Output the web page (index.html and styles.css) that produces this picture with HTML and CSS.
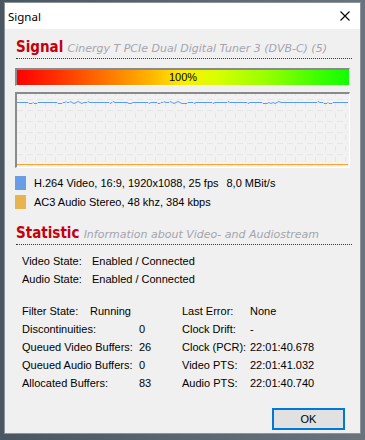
FILE: index.html
```html
<!DOCTYPE html>
<html lang="en">
<head>
    <meta charset="UTF-8">
    <title>Signal</title>
    <link rel="stylesheet" href="styles.css">
</head>
<body>
    <div class="window">
        <div class="titlebar">
            <span class="title">Signal</span>
            <svg class="close" width="10" height="10" viewBox="0 0 10 10">
                <path d="M0.5 0.5L9.5 9.5M9.5 0.5L0.5 9.5" stroke="#000" stroke-width="1.1"/>
            </svg>
        </div>

        <div class="content">
            <div class="section-head">
                <span class="head-main">Signal</span>
                <span class="head-sub">Cinergy T PCIe Dual Digital Tuner 3 (DVB-C) (5)</span>
            </div>

            <div class="level">
                <div class="level-bar">100%</div>
            </div>

            <div class="graph">
                <svg width="331" height="73" viewBox="0 0 331 73">
                    <defs>
                        <pattern id="grid" width="10" height="11" patternUnits="userSpaceOnUse" x="3" y="0">
                            <path d="M0 5.5H3M7 5.5H10M5.5 0V2M5.5 8V11" stroke="#e6e6e6" stroke-width="1" fill="none"/>
                        </pattern>
                    </defs>
                    <rect width="331" height="73" fill="url(#grid)"/>
                    <!-- video bitrate -->
                    <polyline fill="none" stroke="#5b9bef" stroke-width="1"
                        points="0,8.5 11,8.5 12,9.5 15,9.5 16,8.5 17,9.5 20,9.5 21,8.5 40,8.5 41,9.5 45,9.5 46,8.5 48,8.5 49,7.5 50,8.5 52,8.5 53,7.5 55,8.5 57,9.5 59,8.5 61,7.5 63,8.5 65,9.5 67,8.5 70,8.5 71,7.5 73,8.5 92,8.5 93,9.5 95,8.5 96,7.5 98,8.5 110,8.5 112,9.5 114,9.5 116,8.5 131,8.5 132,9.5 134,8.5 140,8.5 141,9.5 143,9.5 144,8.5 146,8.5 147,7.5 149,8.5 152,8.5 153,7.5 155,8.5 157,9.5 159,8.5 161,7.5 163,8.5 165,9.5 170,9.5 171,8.5 176,8.5 177,9.5 179,8.5 195,8.5 196,9.5 198,8.5 210,8.5 211,7.5 213,8.5 230,8.5 231,9.5 233,8.5 245,8.5 246,9.5 250,9.5 252,8.5 254,9.5 256,8.5 258,9.5 260,8.5 262,7.5 264,8.5 300,8.5 301,7.5 303,8.5 306,8.5 307,9.5 310,9.5 311,8.5 312,9.5 315,9.5 316,8.5 331,8.5"/>
                    <!-- audio bitrate -->
                    <line x1="0" y1="70.5" x2="331" y2="70.5" stroke="#f0a830" stroke-width="1"/>
                </svg>
            </div>

            <div class="legend">
                <div class="legend-row">
                    <span class="swatch video"></span>
                    <span>H.264 Video, 16:9, 1920x1088, 25 fps</span>
                    <span class="rate">8,0 MBit/s</span>
                </div>
                <div class="legend-row">
                    <span class="swatch audio"></span>
                    <span>AC3 Audio Stereo, 48 khz, 384 kbps</span>
                </div>
            </div>

            <div class="section-head stat-head">
                <span class="head-main">Statistic</span>
                <span class="head-sub">Information about Video- and Audiostream</span>
            </div>

            <div class="states">
                <span>Video State:</span><span>Enabled / Connected</span>
                <span>Audio State:</span><span>Enabled / Connected</span>
            </div>

            <div class="stats">
                <span>Filter State:</span><span class="wide">Running</span><span>Last Error:</span><span>None</span>
                <span class="wide">Discontinuities:</span><span>0</span><span>Clock Drift:</span><span>-</span>
                <span class="wide">Queued Video Buffers:</span><span>26</span><span>Clock (PCR):</span><span>22:01:40.678</span>
                <span class="wide">Queued Audio Buffers:</span><span>0</span><span>Video PTS:</span><span>22:01:41.032</span>
                <span class="wide">Allocated Buffers:</span><span>83</span><span>Audio PTS:</span><span>22:01:40.740</span>
            </div>

            <div class="buttons">
                <button class="ok-button">OK</button>
            </div>
        </div>
    </div>
</body>
</html>
```

FILE: styles.css
```css
* {
    box-sizing: border-box;
    margin: 0;
    padding: 0;
}

body {
    width: 365px;
    height: 440px;
    overflow: hidden;
    background: linear-gradient(90deg, #4a5762 0%, #5d6974 60%, #6b747d 100%);
    padding: 2px 0 0 4px;
    font-family: "Liberation Sans", Arial, sans-serif;
    font-size: 11px;
    color: #000000;
}

.window {
    width: 357px;
    height: 432px;
    background-color: #f0f0f0;
    border: 1px solid #8c949b;
}

.titlebar {
    height: 26px;
    background-color: #ffffff;
    display: flex;
    align-items: center;
    justify-content: space-between;
    padding: 0 10px 0 3px;
}

.title {
    font-family: "Noto Sans", "Open Sans", sans-serif;
    font-size: 11.5px;
    color: #000000;
}

.close {
    display: block;
    margin-top: -1px;
}

.content {
    padding: 8px 10px 0 10px;
}

.section-head {
    height: 22px;
    line-height: 21px;
    margin-left: 1px;
    margin-right: -2px;
    border-bottom: 1px dotted #3a3a3a;
    white-space: nowrap;
    font-family: "DejaVu Sans Condensed", "DejaVu Sans", sans-serif;
}

.head-main {
    font-size: 15px;
    font-weight: bold;
    color: #c4000e;
}

.head-sub {
    font-family: "DejaVu Sans", sans-serif;
    font-size: 11px;
    font-style: italic;
    color: #a4a4ac;
    margin-left: 1px;
}

.level {
    margin-top: 9px;
    height: 18px;
    border-style: solid;
    border-width: 2px 1px 1px 2px;
    border-color: #8a8a8a #ffffff #ffffff #8a8a8a;
}

.level-bar {
    height: 100%;
    background: linear-gradient(90deg, #ff0000 0%, #ff3000 12%, #ff7a00 28%, #ffb400 40%, #ffec00 50%, #d8ff00 60%, #98ff00 75%, #40ff00 90%, #10ff00 100%);
    text-align: center;
    line-height: 15px;
    font-size: 11px;
}

.graph {
    margin-top: 6px;
    height: 76px;
    border-style: solid;
    border-width: 2px 1px 1px 2px;
    border-color: #8a8a8a #ffffff #ffffff #8a8a8a;
    background-color: #f2f2f2;
}

.graph svg {
    display: block;
}

.legend {
    margin-top: 8px;
    display: flex;
    flex-direction: column;
    gap: 5px;
}

.legend-row {
    height: 14px;
    display: flex;
    align-items: center;
    white-space: nowrap;
}

.swatch {
    width: 11px;
    height: 14px;
    margin-right: 8px;
}

.swatch.video {
    background-color: #6a9de6;
}

.swatch.audio {
    background-color: #e7b450;
}

.rate {
    margin-left: 8px;
}

.stat-head {
    margin-top: 14px;
}

.states {
    margin-top: 7px;
    padding-left: 7px;
    display: grid;
    grid-template-columns: 70px auto;
    grid-auto-rows: 18px;
    align-items: center;
}

.stats {
    margin-top: 14px;
    padding-left: 7px;
    display: grid;
    grid-template-columns: 68px 49px 43px 68px auto;
    grid-auto-rows: 18px;
    align-items: center;
    white-space: nowrap;
}

.stats .wide {
    grid-column: span 2;
}

.buttons {
    margin-top: 16px;
    display: flex;
    justify-content: flex-end;
    padding-right: 5px;
}

.ok-button {
    width: 73px;
    height: 22px;
    background-color: #e1e1e1;
    border: 2px solid #0078d7;
    font-family: "Liberation Sans", Arial, sans-serif;
    font-size: 11px;
    color: #000000;
}
```
